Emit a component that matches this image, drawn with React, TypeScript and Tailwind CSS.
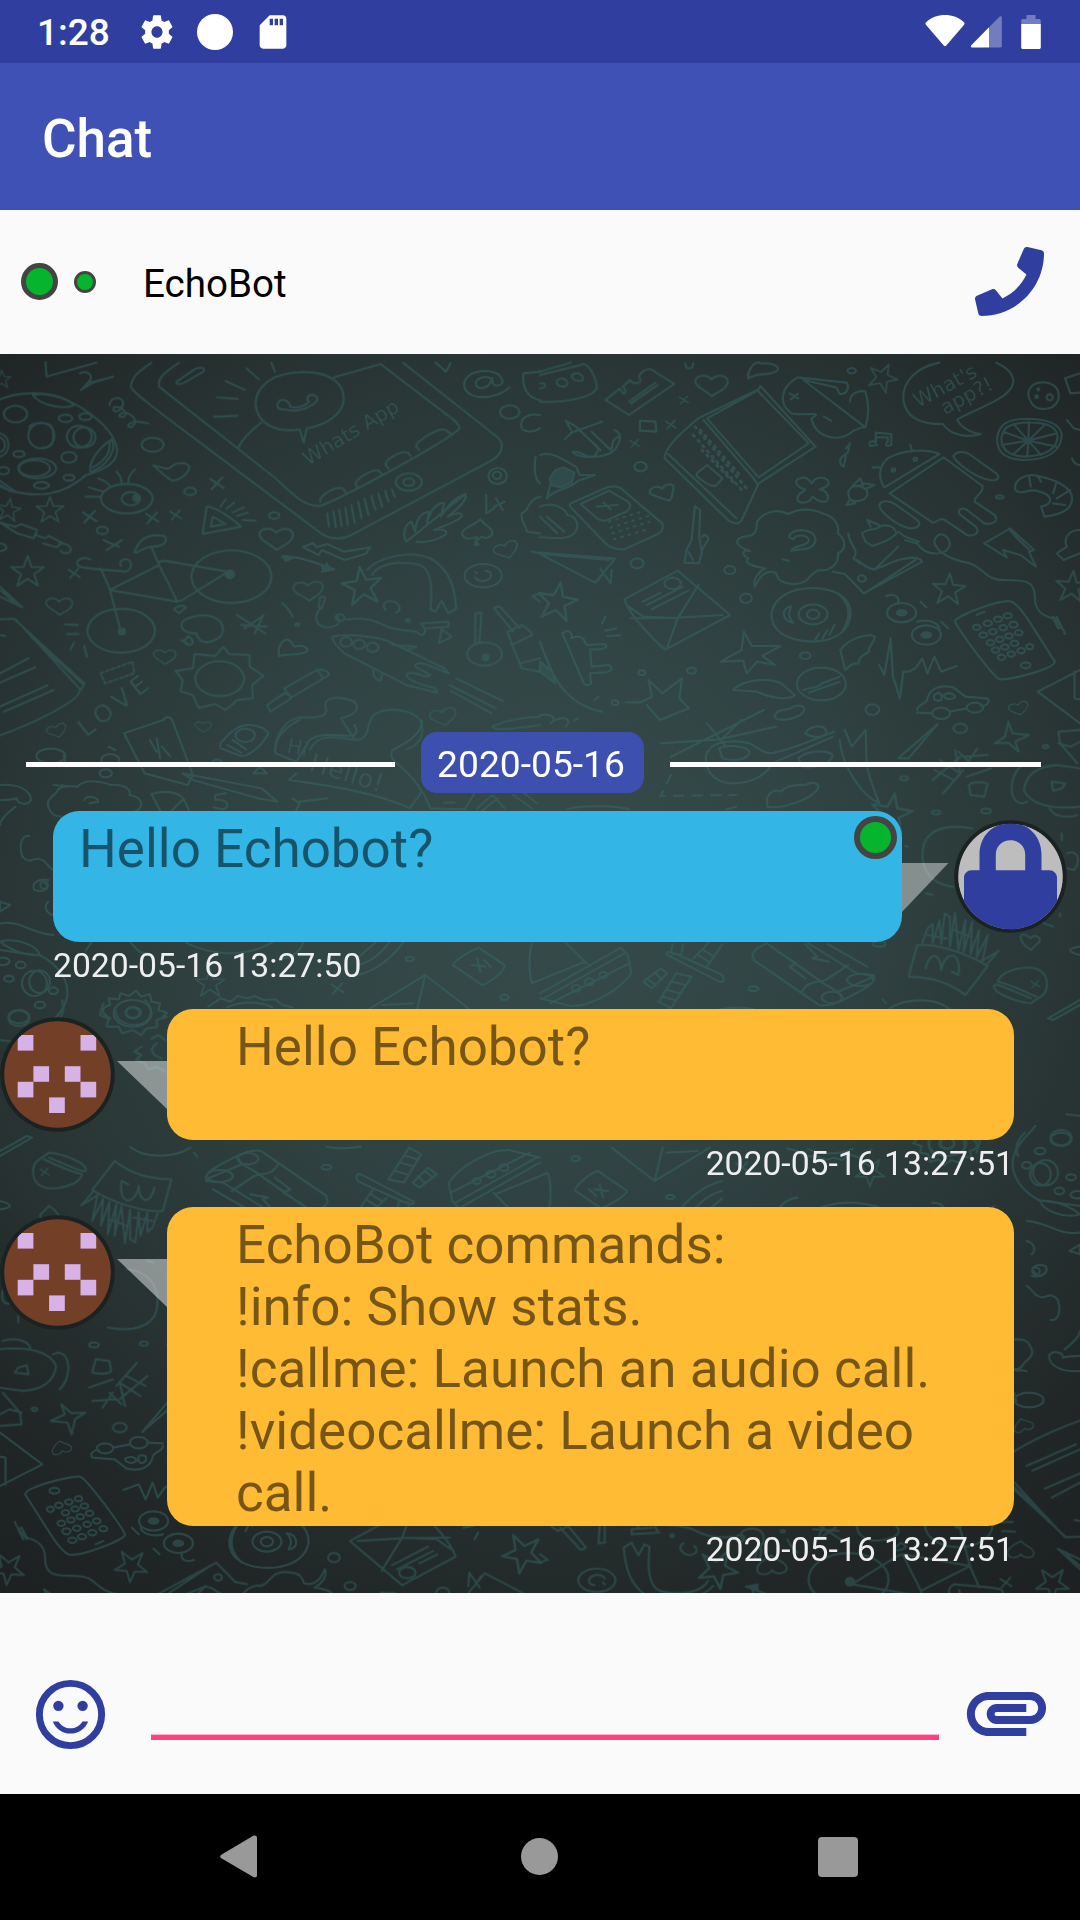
import React from "react";
import { FaPhone } from "react-icons/fa";

const BLUE = "#303f9f";

type Pt = { x: number; y: number; s?: number; r?: number };

const Star = ({ x, y, s = 1, r = 0 }: Pt) => (
  <path
    transform={`translate(${x} ${y}) rotate(${r}) scale(${s})`}
    d="M0-50L12-15L50-14L20 8L32 45L0 22L-32 45L-20 8L-50-14L-12-15Z"
  />
);

const Heart = ({ x, y, s = 1, r = 0 }: Pt) => (
  <path
    transform={`translate(${x} ${y}) rotate(${r}) scale(${s})`}
    d="M0-16C-12-34-46-32-48-12C-48 8-14 16 0 34C20 22 48 10 48-12C44-34 12-32 0-16Z"
  />
);

const Cross = ({ x, y, s = 1, r = 0 }: Pt) => (
  <path transform={`translate(${x} ${y}) rotate(${r}) scale(${s})`} d="M-18-12L18 12M14-16L-14 16" />
);

const rings = (list: number[][]) =>
  list.map(([x, y, rx, ry], i) => <ellipse key={i} cx={x} cy={y} rx={rx} ry={ry} />);

function DoodlesTopLeft() {
  return (
    <g transform="translate(0 350) scale(.34439 .33333)">
      {/* moon */}
      <path d="M0 148C60 122 150 122 210 158C280 196 336 250 340 300C340 340 300 360 250 375C180 440 110 440 40 425L0 410" />
      <path d="M95 135C130 128 190 140 215 165C190 178 120 170 95 135ZM325 268C340 300 310 350 262 366C258 330 290 290 325 268ZM318 276C322 310 300 335 270 352M0 392L45 425M0 404L30 424" />
      {rings([[45, 192, 34, 25], [190, 205, 20, 11], [248, 200, 18, 10], [120, 257, 38, 38], [230, 260, 36, 33], [245, 262, 32, 30], [55, 312, 16, 9], [200, 322, 22, 16], [108, 355, 55, 30], [100, 355, 45, 24], [200, 383, 16, 9], [120, 406, 22, 10], [10, 362, 16, 11]])}
      <path d="M0 250C30 255 35 310 0 320M0 262C18 270 20 300 0 306M85 230C95 215 150 215 152 235C160 280 150 295 122 294" />
      {/* small marks */}
      <Star x={5} y={88} s={0.55} />
      <path d="M132 35L135 80L280 38M232 70C250 58 270 75 262 90L235 120L270 98L328 80L262 98" />
      <path d="M318 165C320 138 355 138 358 160C350 190 325 190 330 172C350 165 375 190 360 200C335 205 350 182 370 190C395 200 400 220 380 232C360 230 378 205 430 220" />
      {/* phone with call bubble */}
      <path d="M440 38C400 65 380 85 380 112C400 140 440 165 470 192L930 548C960 570 990 570 1020 555L1430 330C1460 310 1465 280 1445 262L1170 38" />
      <path d="M520 38C480 65 455 85 462 110L690 295L800 385C850 430 880 470 930 468C1000 440 1290 280 1335 235C1330 215 1310 205 1290 188L1105 42L970 82M690 295C705 265 730 240 758 218" />
      <path d="M870 238C800 250 745 220 742 160C745 100 800 68 880 66C960 66 1000 100 998 150C995 190 950 225 890 235L882 278Z" />
      <path d="M812 152C800 165 805 180 825 178C850 185 880 182 905 165C925 155 928 135 905 135C890 135 890 150 898 155C880 172 860 175 842 170C842 155 825 145 812 152Z" />
      <path d="M512 95L565 58C580 50 600 52 590 65L535 98C522 105 510 102 512 95ZM715 55L752 88M788 38L798 65M655 93L712 120M630 142L690 147M622 200L690 197" />
      <path d="M1208 290C1205 275 1270 235 1290 238L1308 250M1120 345C1115 330 1165 300 1185 308L1192 318M1032 405C1028 390 1080 355 1100 362L1108 372M930 455C925 440 970 408 995 415L1005 428M1208 290L1218 300M1120 345L1128 355M1032 405L1040 412" />
      <path d="M950 490L955 530M968 485L975 532M985 480L992 528M1003 473L1010 525M1020 465L1030 518M1040 455L1050 505M1058 445L1070 495M1078 438L1090 480M1098 430L1110 470M1118 422L1128 455M1138 418L1146 440" />
      {rings([[1187, 396, 38, 26], [1187, 396, 16, 11]])}
      {/* eye, hearts, party hat */}
      <ellipse cx="368" cy="446" rx="75" ry="44" />
      <ellipse cx="380" cy="446" rx="27" ry="20" />
      <circle cx="396" cy="444" r="9" fill="currentColor" />
      <path d="M248 440L292 440M258 412L300 425M285 385C300 390 315 400 320 410M338 365C352 378 354 392 352 404M392 358C375 372 372 385 372 400" />
      {rings([[443, 284, 32, 21], [552, 424, 17, 11], [297, 541, 16, 11], [796, 497, 15, 10], [1480, 186, 28, 20]])}
      <path d="M445 346C470 350 485 362 495 352C510 335 545 335 550 352C545 375 520 390 500 392C480 380 465 365 445 346Z" />
      <path d="M600 470C625 468 680 510 700 530L588 552ZM618 500L612 530L655 522ZM640 470L655 448M658 475L680 458M675 487L708 472M688 498L720 488M705 510L742 512" />
      <Cross x={630} y={400} s={1.1} />
      <Cross x={260} y={500} s={1.1} />
      <Cross x={442} y={503} />
      <Cross x={510} y={495} s={0.9} />
      <Cross x={215} y={670} s={0.9} />
      <path d="M300 570L345 590M355 570L310 600" />
      <Star x={25} y={480} s={0.7} r={8} />
      <Star x={145} y={480} s={0.8} />
      <Star x={80} y={665} s={0.95} />
      {/* chain */}
      <path d="M0 518L45 530L62 522L108 540L98 565L50 550ZM105 555L130 565L142 558L180 578L165 592L125 580M172 580C205 580 212 600 200 608C190 612 178 608 176 602M0 580C25 585 25 600 0 604" />
      {/* bicycle */}
      <ellipse cx="672" cy="680" rx="116" ry="79" />
      <ellipse cx="352" cy="842" rx="98" ry="66" />
      <circle cx="668" cy="673" r="12" fill="currentColor" />
      <circle cx="354" cy="844" r="9" fill="currentColor" />
      <path d="M390 608C405 560 440 550 478 558C490 575 475 590 440 590C415 590 405 610 390 608ZM440 592L462 645L515 755M462 635L478 632L662 665L530 750L515 755L318 720L462 645M292 655L318 715L350 840M262 628C235 615 210 640 232 650C270 660 340 660 365 665C385 655 385 635 370 628C350 625 345 640 352 648M505 778C515 765 535 765 540 772L520 790Z" />
      <Heart x={172} y={768} s={0.8} />
      <Heart x={802} y={565} s={1.02} />
      <Heart x={895} y={722} s={0.9} r={-4} />
      <Heart x={478} y={920} s={0.68} />
      <Heart x={590} y={1130} s={0.5} />
      <Heart x={165} y={1142} s={0.6} r={-18} />
      <Heart x={1470} y={600} s={0.75} r={-20} />
      <Heart x={1287} y={1100} s={0.8} r={-12} />
      <path d="M810 918C805 890 820 865 838 870C850 875 850 888 855 890C880 882 900 895 890 905C870 918 840 910 810 918Z" />
      {/* arrows, feather, spade */}
      <path d="M820 622C840 615 850 625 860 622C900 632 930 642 960 655M935 665L955 655L948 640M880 592L910 578L918 592L950 582L1000 605L1075 592L1062 612L1000 630L935 600L925 615Z" />
      <path d="M822 618L855 622L830 632ZM935 645L970 658L938 664Z" fill="currentColor" />
      <path d="M1352 432L1180 575C1165 545 1180 520 1195 515L1205 545C1210 500 1225 490 1245 485L1240 520C1250 475 1275 455 1290 460L1280 500C1300 470 1320 440 1352 432C1358 450 1330 475 1300 500C1330 485 1345 488 1340 500C1320 520 1290 525 1260 540C1290 535 1300 545 1295 552C1275 570 1230 580 1210 575" />
      <path d="M1395 508C1370 530 1340 535 1342 552C1345 570 1370 568 1385 560L1378 585H1390L1382 572L1400 560C1420 570 1430 555 1430 545C1425 530 1405 525 1395 508Z" />
      <path d="M1412 435L1412 490L1435 475M1440 445L1460 480M1465 455L1435 470" />
      {rings([[1445, 378, 27, 24], [1443, 376, 12, 11], [1403, 677, 54, 35]])}
      <path d="M1380 665L1385 670M1410 662C1430 665 1432 685 1410 692C1395 695 1382 690 1380 682M1555 320C1550 360 1555 390 1568 400M1568 440C1530 450 1540 480 1515 490C1510 520 1530 525 1530 545L1568 550M1545 605L1568 610" />
      {/* at sign and pills */}
      <path d="M1425 85C1400 75 1378 90 1382 105C1390 122 1420 112 1425 95L1430 85C1425 115 1455 110 1460 95C1455 68 1425 60 1395 64C1355 70 1340 95 1352 120C1370 150 1440 150 1480 112M1265 38L1295 65L1308 40M1520 70C1515 110 1530 145 1568 150M1520 70L1568 65M1515 235C1505 200 1540 190 1568 195M1520 240C1540 250 1560 240 1568 235" />
      {/* shooting star */}
      <Star x={1052} y={708} s={1.15} r={-8} />
      <path d="M1065 660C1100 620 1190 600 1250 625C1310 660 1320 720 1325 775L1302 790L1282 752L1265 785L1250 778C1255 720 1255 660 1220 645C1160 630 1100 640 1080 675" />
      {/* line figure */}
      <path d="M930 740L945 742L935 775L925 770ZM930 775C910 800 915 830 950 832C985 830 990 815 980 800M1005 808C1080 800 1100 820 1130 832C1160 842 1190 840 1210 845C1230 870 1245 840 1222 820L1302 815V830L1240 835M1120 780C1100 760 1130 745 1150 758C1165 770 1162 785 1150 788" />
      {rings([[987, 803, 13, 10], [1184, 811, 5, 4], [863, 824, 6, 4]])}
      <path d="M820 760C835 770 842 785 850 800M1282 838L1312 860L1275 880ZM1380 790L1398 788L1392 880L1380 880ZM1435 775C1445 765 1458 770 1460 780L1510 835M1435 775L1490 845M1475 845L1515 825L1530 835L1545 850M1475 850L1485 880L1515 955M1485 885L1545 855M1510 940L1568 925M1515 955L1568 965M1568 730L1545 738L1568 755" />
      <ellipse cx="1407" cy="912" rx="50" ry="35" />
      <circle cx="1410" cy="922" r="9" fill="currentColor" />
      {/* rocket */}
      <path d="M965 860C1010 850 1110 860 1140 880L1290 955L1302 970L1235 942C1210 935 1195 945 1215 955L1250 975C1240 990 1200 960 1185 970C1170 985 1210 1000 1265 1015L1270 1028L1180 1005L1000 910C980 890 965 875 965 860ZM1140 885L1210 890L1180 900M1085 962C1080 975 1090 990 1105 992L1110 972M1325 985L1460 1053M1305 1005L1440 1075M1308 1022L1428 1090" />
      {rings([[1005, 876, 17, 14], [1043, 883, 17, 14], [1082, 892, 17, 14]])}
      {/* apple, scribble */}
      <path d="M570 850C520 850 515 815 545 805C600 785 645 800 648 840C645 870 600 885 580 870L568 850M545 858C560 865 565 880 552 885C535 885 530 870 545 862M525 870L545 880M688 795L770 850M710 835L760 800M765 795L740 850M700 825L775 830" />
      {/* sun */}
      <ellipse cx="638" cy="986" rx="71" ry="52" />
      <path d="M648 890L665 912L724 915L725 950L765 977L732 1005L734 1045L690 1050L655 1080L625 1062L577 1074L560 1035L525 1025L530 990L510 963L560 955L565 912L625 918Z" />
      {/* book */}
      <path d="M0 808L40 806L245 1000L235 1020L70 835L45 808M90 860L238 1000M230 1022C235 1050 100 1120 0 1156M0 970L82 925M0 998L102 952M0 1070L138 1006M12 1085L155 1020M0 710L65 772L0 740M0 720L40 755M0 855L15 858M188 823L226 825M195 852L228 852M215 878L204 900M245 888L252 920" />
      <path strokeDasharray="9 8" d="M292 970L385 935L390 970L305 1000Z" />
      {/* pencil */}
      <path d="M825 1015L920 960C935 955 958 965 955 975L850 1040L825 1030L775 1065L785 1085L845 1045M825 1015L845 1042M920 960L940 985" />
      <path d="M800 1200C800 1150 830 1110 870 1102C930 1105 955 1098 945 1070C940 1040 980 1035 1030 1055C1045 1075 1035 1095 990 1105L1030 1170C1080 1170 1060 1120 1085 1095C1120 1070 1190 1075 1220 1110C1235 1150 1225 1180 1180 1198M900 1200C920 1150 970 1160 1030 1170M1430 1130C1460 1115 1520 1100 1568 1100M1430 1130C1430 1145 1500 1135 1568 1125" />
    </g>
  );
}

function DoodlesTopRight() {
  return (
    <g transform="translate(540 350) scale(.34439 .33333)">
      <path d="M0 75L130 42C155 60 165 95 165 115C150 145 60 160 0 155M0 65L90 38M0 100C20 95 20 115 0 115M50 90C75 75 90 105 70 110C50 110 45 100 50 90M92 75C115 60 135 85 120 92C100 95 92 85 92 75" />
      <path d="M190 150L232 115C240 140 260 130 240 110L262 90C270 105 300 100 290 85C280 75 310 50 325 60L390 102L258 195ZM258 155L335 98M265 160L342 105" />
      <Heart x={498} y={105} s={0.98} />
      <path d="M605 85C600 60 625 30 640 40C680 38 695 50 690 60C670 80 630 65 605 85ZM422 40C420 60 445 60 445 40" />
      <Star x={995} y={82} s={0.85} r={24} />
      {/* laptop */}
      <path d="M640 108L800 290L635 400L585 512C575 525 560 520 548 512L362 325C360 300 400 255 460 205L635 118ZM632 122L780 280L635 382L485 205ZM475 210L620 385L630 400M372 312L570 505M455 370L485 345L530 385L510 408Q490 410 455 378Z" />
      <path strokeDasharray="5 16" strokeWidth="9" d="M450 230L600 415M445 255L590 425M465 240L580 375M470 300L560 395" />
      {/* anchor */}
      <path d="M80 215L105 230L175 300M90 248L180 215M72 268L95 245M75 212L90 240M95 305C110 330 200 325 220 295C240 265 232 245 215 240M150 245L205 300C215 285 205 270 225 262M95 305C120 300 130 325 155 320C180 300 165 285 150 275M290 212L335 215L338 245L290 242Z" />
      <Cross x={380} y={224} s={0.8} />
      <Cross x={275} y={280} s={0.7} />
      <Cross x={418} y={150} s={0.7} />
      {/* mask */}
      <path d="M748 82L890 98C900 115 890 135 870 132L860 112L765 90L945 232C930 230 925 238 910 242C870 280 800 265 788 205C830 180 760 200 730 190C690 160 700 110 748 82ZM900 155C900 130 925 120 945 125C955 160 955 200 945 230M725 130L750 145M728 148L748 132M825 200L845 212" />
      {/* speech bubble */}
      <path d="M1160 38C1100 50 1050 90 1055 150C1060 190 1090 225 1170 222C1190 255 1240 265 1280 252C1250 250 1215 225 1212 208C1270 175 1350 150 1370 110C1385 80 1360 55 1325 38" />
      <path d="M1460 97C1420 97 1410 130 1425 155C1440 185 1490 185 1505 150C1512 115 1490 97 1460 97ZM1525 85L1568 70M1525 85L1540 130L1568 128" />
      {rings([[1480, 142, 9, 9], [1442, 140, 4, 4], [1447, 118, 3, 3], [905, 62, 12, 8], [292, 350, 18, 14], [282, 640, 19, 15], [551, 660, 16, 12], [598, 745, 17, 14], [770, 917, 15, 10], [440, 962, 13, 9], [296, 968, 10, 7], [218, 1058, 10, 7], [965, 1079, 20, 16], [1335, 441, 11, 5]])}
      {/* wheel */}
      <path d="M1400 207C1460 205 1510 215 1515 255C1512 310 1470 330 1400 330C1340 325 1325 300 1328 260C1335 220 1360 210 1400 207ZM1405 218C1460 215 1500 225 1503 260C1500 300 1465 318 1405 320C1355 316 1338 295 1340 262C1345 230 1365 222 1405 218ZM1418 272L1420 215M1418 272L1465 225M1418 272L1500 250M1418 272L1500 290M1418 272L1455 315M1418 272L1415 320M1418 272L1375 312M1418 272L1340 285M1418 272L1345 245M1418 272L1375 222M1530 210L1550 235L1568 240" />
      {/* notes */}
      <path d="M900 280C890 320 900 300 885 315C865 325 870 345 882 350L888 318M900 280L888 295M958 285C950 275 970 270 975 278L975 248L1020 252L1020 285C1005 292 1000 282 1010 275L1010 262L980 262M980 285L958 288" />
      {/* robot */}
      <path d="M1160 312C1120 295 1050 300 1010 325C985 345 980 385 1000 412ZM1172 322L1285 408C1290 430 1258 440 1262 455L1320 495C1335 515 1310 525 1290 520L1240 480C1225 470 1210 480 1218 492L1265 530C1280 550 1260 560 1240 555L1175 510C1160 500 1150 520 1140 518L1015 430ZM1200 320C1205 305 1230 300 1250 315L1325 370C1338 385 1325 395 1305 390C1270 385 1215 345 1200 320ZM985 465C990 450 1015 450 1035 465L1095 510C1110 525 1095 535 1075 535C1040 530 985 485 985 465ZM1075 285L1080 302M965 352L985 352" />
      {rings([[1090, 328, 5, 5], [1026, 360, 5, 5]])}
      {/* bird, flower, candy */}
      <path d="M0 315C40 300 80 340 105 350L115 375L160 375L110 392C90 420 40 415 20 445L30 405" />
      <path d="M28 385L45 360L70 352L100 368L92 398L60 412L32 405Z" fill="currentColor" fillOpacity=".7" />
      <path d="M318 430C320 410 340 405 355 415C365 400 385 400 388 410C385 430 385 445 375 452C355 445 335 440 318 430Z" />
      <path d="M755 385C780 375 785 400 790 400C800 375 840 380 838 400C835 415 815 415 812 418C830 420 845 440 830 455C810 460 795 440 790 440C785 460 745 465 748 445C745 430 770 425 770 418C750 415 730 390 755 385Z" />
      <path d="M895 430C895 405 935 400 950 425C955 450 920 460 900 448ZM905 410L930 385L938 405ZM940 400L972 405L950 415M890 465L900 448L915 460Z" />
      {/* calculator */}
      <path d="M90 460L195 412C210 408 225 408 235 415L355 520C362 540 350 550 330 558L245 598C220 600 200 590 190 580L92 475C85 468 85 462 90 460ZM118 462L200 422L255 455C268 465 260 480 250 485L190 512C175 512 165 505 160 500ZM165 470L225 465M185 458L205 478" />
      <path strokeDasharray="5 17" d="M200 515L290 487M205 533L315 498M210 550L318 515M215 568L305 540" />
      {/* knife */}
      <path d="M450 468L465 480L462 560L470 605L462 640L420 638L425 600L440 570ZM470 560C480 550 490 560 488 570L470 600M430 605L445 630" />
      <path d="M0 470C30 455 70 470 80 495C110 500 115 530 100 550C70 575 30 560 0 562M20 500L70 545M0 500L50 550" />
      {/* thought cloud */}
      <path d="M630 515C650 485 690 475 720 492C760 470 800 480 820 490C860 500 870 530 865 550C890 570 890 600 865 610C870 650 830 665 810 660C780 670 785 700 740 702C700 700 690 690 685 668C660 660 640 670 625 710C615 690 635 665 655 655C620 650 590 640 605 625C580 610 590 600 610 603C570 590 560 570 590 560C620 560 630 550 630 515Z" />
      <path d="M722 560C735 530 800 535 800 570C795 605 750 595 730 602C735 585 780 590 780 570C778 555 745 550 735 568ZM705 628L722 632" />
      {/* cable & card */}
      <path d="M1040 545L1060 560L1100 575L1090 580L1060 570M1095 580C1120 620 1180 620 1190 585C1190 550 1150 540 1145 575C1150 610 1200 630 1240 638C1290 650 1290 690 1345 690C1410 690 1440 690 1437 750C1440 790 1470 800 1490 805M1490 800L1520 840M1490 805L1505 835L1515 830L1500 800M1522 845L1524 852" />
      <path d="M935 550C950 535 980 540 985 530C1010 520 1030 530 1035 550C1020 570 990 580 965 588L945 575ZM950 510L985 525M950 510L960 530M895 550C900 590 930 600 910 625L930 640M850 665L885 672L940 730L1110 635C1100 615 1060 625 1040 630L980 655C960 665 935 640 920 630M950 725L1090 630M1040 590L970 660M925 680C935 670 950 680 945 692C930 700 920 692 925 680" />
      <path d="M1365 535L1290 580L1355 622L1345 600L1395 615L1440 650L1420 605L1435 600ZM1365 540C1380 560 1400 580 1420 598" />
      <path d="M1380 420C1375 395 1400 375 1430 375C1490 385 1545 410 1545 445C1545 480 1510 495 1465 500L1455 470C1500 460 1480 430 1450 425C1420 410 1400 440 1380 420ZM1420 380L1425 410M1445 378L1455 395M1500 395L1490 430M1540 420L1500 445M1525 465L1490 460M1568 540C1530 540 1520 570 1530 590L1500 610L1520 630L1568 610M1545 325C1550 345 1568 345 1568 345" />
      {/* paper plane and letter */}
      <path d="M0 608L218 626L160 698L0 612L200 630M175 655L205 700L208 660M170 690L190 660" />
      <path d="M245 748L400 662L552 795L365 898C350 890 260 800 245 748ZM258 770L300 800L400 805L460 705M262 805L400 803L530 795M400 805L370 890M298 755L350 728M310 765L415 710M325 778L430 722" />
      <ellipse cx="385" cy="700" rx="24" ry="17" />
      <Star x={50} y={755} s={1.15} r={10} />
      <path d="M592 845L615 888L698 888L645 918L682 945L630 935L600 970L590 932L525 935L585 900Z" />
      <Star x={1187} y={718} s={0.95} r={4} />
      <Star x={1545} y={710} s={0.95} r={5} />
      {/* disc */}
      <path d="M790 714C860 715 905 745 902 795C895 850 850 875 785 875C710 870 670 840 672 790C680 740 730 715 790 714ZM865 730C900 760 905 800 880 840M730 770C700 770 700 815 735 818C720 800 720 790 730 770M800 868L810 850M820 865L835 840M840 855L855 825" />
      {rings([[793, 793, 42, 30], [793, 793, 18, 14], [1050, 788, 42, 29], [1122, 855, 42, 29], [817, 1002, 71, 49]])}
      <ellipse cx="1050" cy="788" rx="14" ry="8" fill="currentColor" />
      <ellipse cx="1122" cy="855" rx="14" ry="8" fill="currentColor" />
      <path d="M1005 738C1030 730 1045 740 1040 760M1105 755L1122 772M1095 815C1130 805 1160 820 1160 840M1165 815L1185 835" />
      {/* mobile */}
      <path d="M1205 815C1200 800 1340 745 1370 755C1390 765 1400 785 1415 805L1495 935C1490 960 1360 990 1335 988C1315 980 1215 840 1205 815ZM1268 795L1290 785" />
      {rings([[1268, 832, 11, 8], [1300, 820, 12, 8], [1330, 808, 12, 8], [1358, 797, 12, 8], [1287, 855, 11, 8], [1315, 845, 11, 8], [1345, 833, 11, 8], [1375, 824, 12, 9], [1308, 878, 11, 8], [1335, 868, 11, 8], [1362, 858, 11, 8], [1390, 848, 11, 8], [1323, 900, 11, 8], [1350, 891, 11, 8], [1378, 880, 11, 8], [1340, 922, 11, 8], [1368, 912, 11, 8], [1397, 902, 11, 8], [1422, 890, 10, 8]])}
      <ellipse cx="1410" cy="946" rx="14" ry="9" />
      {/* dinosaur, crown, wings */}
      <path d="M65 850C80 835 100 850 90 865C120 850 130 870 135 885L190 882C200 895 180 900 145 898L150 950L200 945C215 955 205 968 180 968L145 970L148 1000C140 1010 130 1005 125 995ZM190 800L180 820M190 842L222 835M195 858L232 856M0 875C30 960 60 1060 180 1085M110 1105L100 1112M158 1050L170 1040" />
      <path d="M0 935L35 965L45 1000L0 965Z" fill="currentColor" fillOpacity=".6" />
      <path d="M248 1057H292L325 1040L315 990L355 1030L412 985L405 1045L432 1075L348 1110L310 1065M560 1020C590 990 660 980 700 1000L740 1035C720 1055 660 1040 630 1025ZM872 900C900 860 960 850 972 860C970 885 950 890 955 905C940 915 925 920 925 940C900 940 900 950 885 960M872 900L885 955M680 1100C690 1070 720 1085 735 1070C770 1060 775 1080 755 1095C730 1110 690 1115 680 1100ZM765 1020C780 1010 800 1020 820 1000L870 980M780 1028L870 995" />
      <path d="M985 945L1000 975L1018 865L1025 980L1045 1045L1055 965L1070 965L1090 955L1110 925L1125 970L1145 920L1165 965L1210 948" />
      {/* car */}
      <path d="M1095 1080C1095 1060 1125 1065 1125 1045C1135 1010 1170 1005 1200 1012L1235 1040L1300 1045C1310 1060 1290 1070 1280 1068M1095 1088L1140 1090M1190 1085L1240 1075M1145 1035C1160 1020 1170 1035 1165 1050C1150 1055 1140 1050 1145 1035M1172 1035C1190 1020 1215 1040 1200 1045C1185 1050 1172 1045 1172 1035" />
      {rings([[1165, 1090, 26, 17], [1263, 1073, 24, 15]])}
      <Heart x={1390} y={1075} s={0.6} r={-15} />
      <path d="M1568 960L1445 1025L1568 1120M1552 965V1045L1568 1048M0 1095C40 1090 50 1110 30 1120M45 1110C80 1095 90 1115 75 1130" />
    </g>
  );
}

function DoodlesMidLeft() {
  return (
    <g transform="translate(0 720) scale(.34439 .33333)">
      <path d="M475 0C480 -12 495 -10 500 0L560 165L545 195L420 160L360 40ZM435 60L455 95M455 55L465 115M470 80L495 110M640 70C680 20 710 0 765 25L780 40C760 80 720 110 700 108L640 85ZM660 75L700 98M675 60L715 88" />
      <ellipse cx="712" cy="46" rx="28" ry="20" />
      <path d="M800 100C790 60 830 20 870 0M800 100L860 125L900 60C950 20 1060 80 1030 15M860 160L840 180C900 190 1080 210 1190 265L1225 215C1180 130 1120 130 1140 90C1180 70 1230 40 1225 0M530 160L760 205L805 245L750 235L560 180ZM850 235L870 250L860 272M870 245L950 235M735 160L755 140L775 160Z" />
      {rings([[148, 108, 42, 22], [320, 120, 26, 18], [307, 160, 18, 12], [630, 128, 14, 9]])}
      <path d="M185 105L190 128M315 80L335 90M155 195L195 200L180 195" />
      {/* cloud */}
      <path d="M145 270C125 240 160 225 165 215C175 190 215 200 225 200C250 170 310 190 320 195C360 190 385 210 375 225C410 230 420 255 400 270C380 285 345 275 335 285L180 290C160 290 150 285 145 270ZM245 240C250 225 285 230 285 245L260 250" />
      <path d="M440 222C480 210 520 215 535 240L550 275M440 222L465 272M495 275L530 240M625 225L655 220M625 225V240C660 235 670 260 650 268L620 262M1230 220L1250 265L1350 268L1380 215M1290 248H1320" />
      <path strokeDasharray="10 6" d="M1385 265L1430 225L1465 265M1400 272L1445 235M1490 225L1545 265M1510 210L1560 250" />
      <path d="M0 195C50 190 90 210 90 240C80 260 45 250 50 235C30 240 0 240 0 240M45 260C20 280 0 300 0 315M85 348C60 345 55 380 65 410C90 440 100 400 130 425C150 450 155 450 155 450M140 480C110 475 90 490 100 510C130 520 150 500 130 490M140 545C125 560 135 580 155 585" />
      <circle cx="128" cy="495" r="11" />
      <path d="M0 545L30 555L0 575ZM0 610C60 600 90 640 155 645" />
      {/* planet */}
      <path d="M0 665C50 650 110 680 115 705C80 710 30 690 0 665ZM115 705C180 740 200 790 195 830C185 880 150 900 130 930M0 690L110 706" />
      {rings([[8, 724, 20, 11], [60, 735, 14, 10], [100, 790, 36, 38], [115, 785, 30, 34], [26, 776, 14, 9], [155, 812, 13, 10], [116, 855, 15, 10], [55, 890, 30, 20]])}
      {/* gears */}
      <path d="M320 895C290 880 295 860 320 855L315 835L345 838L350 820L375 828L395 812L410 830L435 822L440 845L465 850L460 870L485 878L470 895" />
      <ellipse cx="385" cy="880" rx="55" ry="40" />
      <ellipse cx="387" cy="878" rx="22" ry="17" />
      <path d="M605 860L640 835L670 845L690 828L715 835L740 828L765 840L800 838L820 855L850 862M660 862C700 842 760 845 790 862" />
      <Star x={610} y={790} s={0.85} />
      <Cross x={980} y={805} />
      {/* bowl, dice, tent */}
      <path d="M380 668C400 690 400 700 430 700M540 668C600 700 700 720 790 668M880 668C870 700 840 715 820 715M1170 668C1120 740 1060 760 1040 765M1130 668C1090 720 1060 730 1040 735M1090 668L1040 712M265 668L250 690" />
      <path d="M1315 735C1320 720 1370 690 1390 683L1465 735C1470 750 1420 790 1400 795ZM1370 735L1410 740M1385 715L1395 755M1405 720L1425 740" />
      <path d="M1075 865L1235 765L1360 865M1235 765L1212 865M1545 670C1535 700 1535 760 1545 790L1568 780M1110 855L1200 850" />
      {rings([[1190, 717, 12, 6], [1465, 832, 12, 8]])}
    </g>
  );
}

function DoodlesMidRight() {
  return (
    <g transform="translate(540 720) scale(.34439 .33333)">
      {/* helicopter */}
      <path d="M350 70L520 58L685 20M380 110L650 -30M485 10L540 80M585 0L530 55M490 95C500 60 570 60 610 70C640 90 660 105 680 98C740 85 790 60 855 35M485 95C470 140 500 190 560 190C620 190 660 160 675 130L850 50M520 85C550 70 610 80 608 100C600 120 560 125 530 115ZM770 40C780 20 820 10 830 30C840 50 800 60 770 40M750 115C770 95 830 85 850 105C850 125 800 150 760 140Z" />
      <path strokeDasharray="28 26" d="M380 165L350 228L570 225" />
      <path d="M660 250C655 220 680 205 700 215C720 190 760 195 770 195C800 180 815 195 805 210C780 240 700 270 660 260ZM80 268C120 255 210 255 260 268M540 268L570 260" />
      <path d="M885 30L905 80L945 30C950 60 940 130 960 180L985 250C940 230 880 150 870 60M1040 115L1155 12L1070 115Z" />
      <Star x={1020} y={280} s={1.2} r={10} />
      <path d="M1360 5L1372 40L1420 45L1380 65L1390 95L1360 68L1320 70L1350 50Z" />
      <path d="M1140 180L1220 110M1160 120L1220 160M1205 90L1220 160M1170 220L1230 150M1230 110L1300 105M1270 85L1240 130M1145 150L1200 180M1240 170L1310 145M1215 95L1250 130M1245 195C1255 185 1275 185 1300 190L1290 230L1250 225Z" />
      {rings([[1220, 25, 20, 14], [1468, 80, 8, 5], [1057, 175, 12, 6], [1150, 277, 12, 6], [1295, 273, 14, 7]])}
      <path d="M1505 35L1568 30M1505 35L1510 70L1560 130M1505 70L1540 80L1568 65M1395 140C1360 170 1360 250 1400 250L1415 245M1405 210C1410 165 1440 140 1500 135L1568 145M1405 210C1420 250 1480 270 1568 260M1485 185L1525 190L1515 205L1490 212ZM1480 265C1490 290 1530 295 1560 285" />
      {/* teapot and fries */}
      <path d="M1255 325C1180 310 1130 330 1115 370C1100 430 1120 490 1200 500M1060 378L1068 380M1120 520L1140 525M1530 400C1568 385 1568 430 1550 450L1530 445M1515 340V360M1490 620L1450 605M1510 580V590" />
      <path d="M1095 675C1150 670 1240 700 1300 738L1235 825C1180 780 1120 770 1070 770ZM1120 745C1130 690 1165 700 1165 750C1175 690 1225 690 1215 765L1195 755" />
      <path strokeWidth="6" d="M1110 668L1125 625L1140 612L1140 670L1160 600L1165 672L1175 580L1190 590L1190 680L1205 578L1215 690L1235 600L1230 695L1255 605L1250 702L1275 630L1268 712L1300 645L1285 722L1332 692L1300 730M1125 645L1180 655M1200 630L1250 650" />
      <path d="M1395 650C1400 635 1420 650 1425 655C1435 640 1455 650 1450 665L1425 690C1410 680 1395 665 1395 650Z" />
      {/* burger */}
      <path d="M1330 780C1350 745 1420 735 1450 750C1480 770 1475 810 1460 825L1425 850C1380 845 1320 820 1318 800C1315 785 1345 800 1425 835M1330 785C1350 790 1400 810 1440 830" />
      <Cross x={1438} y={792} s={0.7} />
      <path d="M1475 895L1568 840M1475 895L1490 900L1568 855M1568 680C1530 685 1530 695 1568 705" />
      {/* batteries */}
      <path d="M620 715C610 700 625 685 660 670M620 720L810 855C830 860 860 850 880 840L865 815L830 795L665 675M865 815L970 770C975 785 960 800 880 840M760 815C780 780 800 790 830 780L895 735M780 670L920 760L970 765M690 695L745 730L725 740L770 775M770 672L805 710L790 715L840 725M835 672L950 740" />
      {rings([[930, 780, 38, 18], [848, 832, 30, 17], [620, 806, 14, 7], [985, 672, 18, 8]])}
      {/* biplane */}
      <path d="M370 705L520 785C540 790 535 765 520 760L390 700C370 690 360 700 370 705ZM385 672L380 700L410 705L415 672M300 785L350 745L370 760L325 805ZM345 845L395 760L440 770L380 865ZM445 715L490 668M485 740L530 672M310 775L335 795M335 760L355 780M355 830L390 840M370 810L405 820M385 785L420 795M460 705L490 725M475 690L505 710" />
      {/* boat */}
      <path d="M0 820L235 683L255 705L265 760C230 810 150 860 90 858L0 835M10 835L245 700M30 850L260 730M75 668L135 730M0 780L130 725" />
      {rings([[105, 805, 13, 10], [143, 785, 13, 10], [184, 765, 12, 9]])}
      <path d="M520 868C570 860 600 862 620 868M1015 865C1060 835 1150 830 1190 868M995 838L1005 850" />
    </g>
  );
}

function DoodlesCenter() {
  return (
    <g transform="translate(0 1000) scale(.34439 .33333)">
      <path d="M300 10L290 45L315 55L310 80L345 80L355 100L385 90L410 105L425 85L455 82L455 60L485 50M410 140L390 155L410 165L395 180L420 190L430 208L455 200L480 215M440 115L460 105L480 120" />
      <path d="M335 30C335 70 380 80 410 72C445 60 445 20 420 0M455 130C435 145 435 165 470 175" />
      <ellipse cx="385" cy="38" rx="20" ry="15" />
      <path d="M0 120L40 125M180 0C190 30 180 50 160 70" />
      <ellipse cx="55" cy="55" rx="30" ry="23" />
    </g>
  );
}

function Wallpaper() {
  return (
    <svg
      aria-hidden="true"
      className="absolute inset-0 h-full w-full text-[#3a6b6b]"
      viewBox="0 354 1080 1239"
      fill="none"
      stroke="currentColor"
      strokeWidth="6.5"
      strokeLinecap="round"
      strokeLinejoin="round"
    >
      <defs>
        <radialGradient id="glow" gradientUnits="userSpaceOnUse" cx="540" cy="890" r="860">
          <stop offset="0" stopColor="#354b4a" />
          <stop offset="0.3" stopColor="#314544" />
          <stop offset="0.62" stopColor="#293635" />
          <stop offset="0.85" stopColor="#212727" />
          <stop offset="1" stopColor="#1d2121" />
        </radialGradient>
        <clipPath id="upper">
          <rect x="0" y="361" width="1080" height="717" />
        </clipPath>
      </defs>
      <rect y="354" width="1080" height="1239" fill="url(#glow)" stroke="none" />
      <g opacity="0.46" className="blur-[0.6px]">
        <g id="sketches" clipPath="url(#upper)">
          <DoodlesTopLeft />
          <DoodlesTopRight />
          <DoodlesMidLeft />
          <DoodlesMidRight />
          <DoodlesCenter />
        </g>
        <use href="#sketches" transform="rotate(180 540 1078)" />
        <g fill="currentColor" stroke="none" fontFamily="'DejaVu Sans', sans-serif">
          <text transform="translate(308 466) rotate(-31)" fontSize="20" textLength="108">Whats App</text>
          <text transform="translate(918 408) rotate(-28)" fontSize="20">What's</text>
          <text transform="translate(945 415) rotate(-28)" fontSize="20">app?!</text>
          <text transform="translate(86 738) rotate(-38)" fontSize="25" textLength="82">LOVE</text>
          <text transform="translate(308 770) rotate(17)" fontSize="25" textLength="76">Hello!</text>
          <text transform="translate(286 752) rotate(12)" fontSize="20">Hi</text>
        </g>
      </g>
    </svg>
  );
}

function StatusBar() {
  return (
    <div className="flex h-[63px] items-center bg-[#303f9f] text-white">
      <span className="ml-[37px] w-[101px] pt-[2px] text-[37px] leading-[63px] font-medium">1:28</span>
      <svg className="h-[40px] w-[38px]" viewBox="0 0 24 24" preserveAspectRatio="none" fill="currentColor">
        <path d="M19.43 12.98c.04-.32.07-.64.07-.98s-.03-.66-.07-.98l2.11-1.65c.19-.15.24-.42.12-.64l-2-3.46c-.12-.22-.39-.3-.61-.22l-2.49 1c-.52-.4-1.08-.73-1.69-.98l-.38-2.65A.488.488 0 0 0 14 2h-4c-.25 0-.46.18-.49.42l-.38 2.65c-.61.25-1.17.59-1.69.98l-2.49-1c-.23-.09-.49 0-.61.22l-2 3.46c-.13.22-.07.49.12.64l2.11 1.65c-.04.32-.07.65-.07.98s.03.66.07.98l-2.11 1.65c-.19.15-.24.42-.12.64l2 3.46c.12.22.39.3.61.22l2.49-1c.52.4 1.08.73 1.69.98l.38 2.65c.03.24.24.42.49.42h4c.25 0 .46-.18.49-.42l.38-2.65c.61-.25 1.17-.59 1.69-.98l2.49 1c.23.09.49 0 .61-.22l2-3.46c.12-.22.07-.49-.12-.64l-2.11-1.65zM12 15.5c-1.93 0-3.5-1.57-3.5-3.5s1.57-3.5 3.5-3.5 3.5 1.57 3.5 3.5-1.57 3.5-3.5 3.5z" />
      </svg>
      <span className="ml-[21px] h-9 w-9 rounded-full bg-white" />
      <svg className="ml-[20px] h-[40px] w-[40px]" viewBox="0 0 24 24" fill="currentColor">
        <path d="M18 2h-8L4.02 8 4 20c0 1.100.9 2 2 2h12c1.100 0 2-.9 2-2V4c0-1.100-.9-2-2-2zm-6 6h-2V4h2v4zm3 0h-2V4h2v4zm3 0h-2V4h2v4z" />
      </svg>
      <div className="mr-[39px] ml-auto flex items-center">
        <svg className="mb-px h-[33px] w-[42px]" viewBox="0 0 42 34" fill="currentColor">
          <path d="M1.500 7.500C7 2.500 13.500 0 21 0s14 2.500 19.500 7.500c.8.800.8 1.700.2 2.500L22.300 31.500c-.8.900-1.800.9-2.600 0L1.300 10c-.6-.8-.6-1.700.2-2.500z" />
        </svg>
        <svg className="ml-1 h-[32px] w-[32px]" viewBox="0 0 32 32" fill="currentColor">
          <path opacity=".32" d="M29.500.700c1-.9 2.300-.5 2.300.9V30c0 .9-.5 1.400-1.400 1.400H19V11.200z" />
          <path d="M19 11.200V31.400H2.200C.8 31.400.4 30.200 1.300 29.200z" />
        </svg>
        <svg className="ml-[19px] h-[34px] w-[20px]" viewBox="0 0 20 34">
          <path fill="white" fillOpacity=".32" d="M5.500 0h9v4h3.500c1.200 0 1.800.6 1.800 1.800V9H.2V5.800C.2 4.600.8 4 2 4h3.500z" />
          <path fill="white" d="M.2 9h19.600v23.200c0 1.200-.6 1.800-1.800 1.800H2c-1.200 0-1.800-.6-1.800-1.800z" />
        </svg>
      </div>
    </div>
  );
}

function ContactBar() {
  return (
    <div className="flex h-[144px] items-center bg-[#fafafa] pr-9 pb-px pl-[21px]">
      <span className="h-[37px] w-[37px] rounded-full border-[5.500px] border-[#444] bg-[#06b42e]" />
      <span className="ml-4 h-[22px] w-[22px] rounded-full border-[3px] border-[#444] bg-[#06b42e]" />
      <span className="mt-[5px] ml-[47px] text-[38.600px] text-black">EchoBot</span>
      <FaPhone className="ml-auto h-[69px] w-[69px] text-[#303f9f]" />
    </div>
  );
}

function LockAvatar() {
  return (
    <svg className="mt-[9px] ml-[5px] h-[113px] w-[113px]" viewBox="-56.500 -56.500 113 113">
      <defs>
        <clipPath id="lockClip">
          <ellipse rx="52.300" ry="52.800" />
        </clipPath>
      </defs>
      <circle r="56.300" fill="#1b2222" />
      <g clipPath="url(#lockClip)">
        <circle r="52.800" fill="#bdbdbd" />
        <path
          fill={BLUE}
          d="M-46.500 1C-46.500-3-43-6.300-39-6.300h8V-22C-31-40-18-53.500 0-53.500S31-40 31-22V-6.300h8c4 0 7.500 3.300 7.500 7.300V60h-93zM-14.700-6.300h29.400V-22C14.700-30.500 8-36.300 0-36.300S-14.700-30.500-14.700-22z"
        />
      </g>
    </svg>
  );
}

const CELLS = [[0, 0], [4, 0], [1, 2], [3, 2], [0, 3], [4, 3], [2, 4]];

function BotAvatar() {
  return (
    <svg className="mt-[8px] h-[115px] w-[115px] shrink-0" viewBox="-57.500 -57.500 115 115">
      <defs>
        <clipPath id="botClip">
          <circle r="53.300" />
        </clipPath>
      </defs>
      <circle r="57.300" fill="#1b2222" />
      <circle r="53.300" fill="#733f27" />
      <g clipPath="url(#botClip)" fill="#d7b2e6">
        {CELLS.map(([c, r]) => (
          <rect key={`${c}-${r}`} x={-39.8 + c * 15.700} y={-39.500 + r * 15.600} width="15.700" height="15.600" />
        ))}
      </g>
    </svg>
  );
}

function BotMessage({ lines, height }: { lines: string[]; height: string }) {
  return (
    <div className="flex">
      <BotAvatar />
      <svg className="mt-[52px] ml-[2px] h-[49px] w-[50px] shrink-0" viewBox="0 0 50 49">
        <path d="M0 0H50V48z" fill="white" fillOpacity=".46" />
      </svg>
      <div className="w-[847px]">
        <div className={`${height} rounded-[26px] bg-[#ffbb33] pt-[7px] pl-[69px] text-[53px] leading-[62px] text-black/[.54]`}>
          {lines.map((l) => (
            <div key={l} className="whitespace-nowrap">{l}</div>
          ))}
        </div>
        <div className="h-[67px] text-right text-[33.700px] leading-[48px] text-[#eee]">2020-05-16 13:27:51</div>
      </div>
    </div>
  );
}

export default function App() {
  return (
    <div className="flex h-[1920px] w-[1080px] flex-col overflow-hidden bg-black" style={{ fontFamily: "Roboto, sans-serif" }}>
      <StatusBar />
      <header className="flex h-[147px] items-center bg-[#3f51b5] pt-[5px] pl-[42px]">
        <h1 className="text-[53px] leading-none font-medium text-white">Chat</h1>
      </header>
      <ContactBar />

      <main className="relative h-[1239px]">
        <Wallpaper />
        <div className="relative pt-[378px]">
          <div className="flex h-[61px] items-center pl-[26px]">
            <span className="mt-[4px] h-[5px] w-[369px] bg-white" />
            <span className="mx-[26px] h-[61px] w-[223px] rounded-[16px] bg-[#3f51b5]/95 pr-[3px] text-center text-[37.200px] leading-[65px] text-white">
              2020-05-16
            </span>
            <span className="mt-[4px] h-[5px] w-[371px] bg-white" />
          </div>

          <div className="mt-[18px] flex h-[198px] items-start pl-[53px]">
            <div className="w-[849px]">
              <div className="relative h-[131px] rounded-[26px] bg-[#33b5e5] pt-[7px] pl-[26px] text-[53px] leading-[62px] text-black/[.54]">
                Hello Echobot?
                <span className="absolute top-[5px] right-[5px] h-[43px] w-[43px] rounded-full border-[6px] border-[#444] bg-[#06b42e]" />
              </div>
              <div className="text-[33.700px] leading-[48px] text-[#eee]">2020-05-16 13:27:50</div>
            </div>
            <svg className="mt-[52px] h-[49px] w-[47px]" viewBox="0 0 47 49">
              <path d="M0 0H46.500L0 49z" fill="white" fillOpacity=".42" />
            </svg>
            <LockAvatar />
          </div>

          <BotMessage height="h-[131px]" lines={["Hello Echobot?"]} />
          <BotMessage
            height="h-[319px]"
            lines={[
              "EchoBot commands:",
              "!info: Show stats.",
              "!callme: Launch an audio call.",
              "!videocallme: Launch a video",
              "call.",
            ]}
          />
        </div>
      </main>

      <div className="flex h-[201px] items-start bg-[#fafafa] text-[#303f9f]">
        <svg className="mt-[80px] ml-[29px] h-[83px] w-[83px]" viewBox="0 0 24 24" fill="currentColor">
          <circle cx="15.500" cy="9.500" r="1.500" />
          <circle cx="8.500" cy="9.500" r="1.500" />
          <path d="M12 16c-1.480 0-2.750-.81-3.450-2H6.880c.8 2.050 2.790 3.500 5.120 3.500s4.320-1.450 5.120-3.500h-1.670c-.7 1.190-1.970 2-3.450 2z" />
          <circle cx="12" cy="12" r="9" fill="none" stroke="currentColor" strokeWidth="2" />
        </svg>
        <div className="mt-[141px] ml-[39px] h-[6px] w-[788px] border-t border-[#ffb3cc] bg-[#ff4081]" />
        <svg className="mt-[71px] ml-[20px] h-[96px] w-[95px]" viewBox="0 0 24 24" preserveAspectRatio="none" fill="currentColor">
          <path d="M2 12.500C2 9.460 4.460 7 7.500 7H18c2.210 0 4 1.790 4 4s-1.790 4-4 4H9.500C8.120 15 7 13.880 7 12.500S8.120 10 9.500 10H17v2H9.410c-.55 0-.55 1 0 1H18c1.100 0 2-.9 2-2s-.9-2-2-2H7.500C5.570 9 4 10.570 4 12.500S5.570 16 7.500 16H17v2H7.500C4.460 18 2 15.540 2 12.500z" />
        </svg>
      </div>

      <nav className="flex h-[126px] items-center bg-black pb-px pl-[220px] text-[#999]">
        <svg className="h-[43px] w-[37px]" viewBox="0 0 37 43" fill="currentColor">
          <path d="M1.300 19.800L33.300.700C35 0 37 .8 37 2.800V40.200C37 42.200 35 43 33.300 42L1.300 23.200C-.2 22.200-.2 20.800 1.300 19.800z" />
        </svg>
        <span className="ml-[264px] h-[37px] w-[37px] rounded-full bg-[#999]" />
        <span className="ml-[260px] h-[40px] w-[40px] rounded-[4px] bg-[#999]" />
      </nav>
    </div>
  );
}
